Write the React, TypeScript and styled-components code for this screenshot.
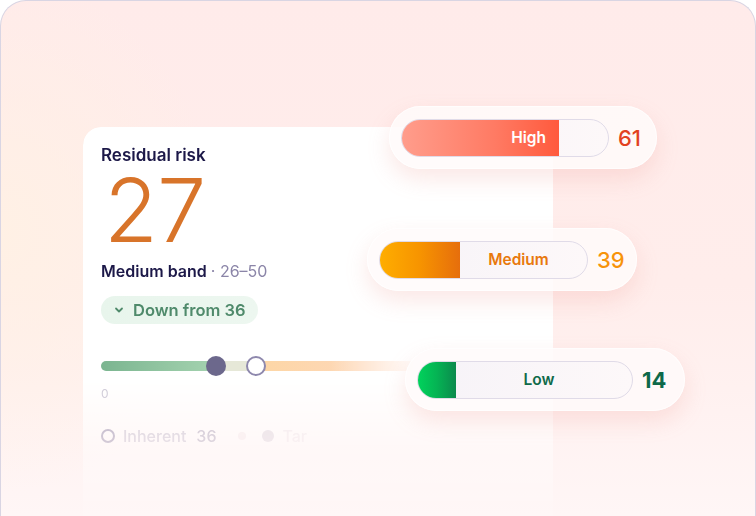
import React from 'react';
import styled, { createGlobalStyle } from 'styled-components';

const Global = createGlobalStyle`
  html, body { margin: 0; padding: 0; background: #ffffff; }
  body { width: 756px; height: 516px; overflow: hidden; font-family: Inter, "Noto Sans", sans-serif; }
`;

const S = {
    Frame: styled.div`
    position: relative;
    box-sizing: border-box;
    width: 756px;
    height: 516px;
    overflow: hidden;
    border: 1px solid #d9d5e3;
    border-bottom: none;
    border-radius: 26px 26px 0 0;
    background:
      radial-gradient(ellipse 220px 260px at 0% 45%, rgba(255, 241, 228, 0.9), rgba(255, 241, 228, 0) 100%),
      linear-gradient(180deg, #ffebea 0%, #ffedeb 55%, #fff6f6 100%);
    padding: 126px 0 0 82px;
    `,
    Card: styled.div`
    box-sizing: border-box;
    width: 470px;
    height: 420px;
    border-radius: 18px;
    background: #ffffff;
    box-shadow: 0 6px 28px rgba(235, 150, 140, 0.18);
    padding: 18px 18px;
    display: flex;
    flex-direction: column;
    align-items: flex-start;
    -webkit-mask-image: linear-gradient(180deg, #000 0px, #000 250px, rgba(0,0,0,0.45) 320px, rgba(0,0,0,0.1) 390px);
    mask-image: linear-gradient(180deg, #000 0px, #000 250px, rgba(0,0,0,0.45) 320px, rgba(0,0,0,0.1) 390px);
    `,
    Title: styled.div`
    font-size: 17px;
    line-height: 20px;
    font-weight: 600;
    color: #1c1848;
    `,
    Score: styled.div`
    margin-top: 10px;
    height: 70px;
    display: flex;
    align-items: center;
    font-size: 88px;
    line-height: 70px;
    font-weight: 300;
    color: #d8742a;
    letter-spacing: -1px;
    margin-left: 3px;
    `,
    Band: styled.div`
    margin-top: 16px;
    font-size: 16px;
    line-height: 20px;
    font-weight: 600;
    color: #1c1848;
    `,
    Range: styled.span`
    font-weight: 400;
    color: #8b85a8;
    `,
    Delta: styled.div`
    margin-top: 15px;
    height: 28px;
    display: flex;
    align-items: center;
    gap: 8px;
    padding: 0 12px 0 12px;
    border-radius: 14px;
    background: linear-gradient(90deg, #e8f5ec 0%, #edf7f0 100%);
    font-size: 16.5px;
    font-weight: 600;
    color: #4f8a6b;
    `,
    Slider: styled.div`
    margin-top: 32px;
    width: 320px;
    height: 20px;
    display: flex;
    align-items: center;
    -webkit-mask-image: linear-gradient(90deg, #000 0, #000 230px, transparent 320px);
    mask-image: linear-gradient(90deg, #000 0, #000 230px, transparent 320px);
    `,
    Track: styled.div<{ $w: number; $bg: string; $round?: boolean }>`
    flex: 0 0 ${p => p.$w}px;
    height: 10px;
    background: ${p => p.$bg};
    border-radius: ${p => (p.$round ? '5px 0 0 5px' : '0')};
    `,
    Knob: styled.div<{ $hollow?: boolean }>`
    box-sizing: border-box;
    flex: 0 0 20px;
    width: 20px;
    height: 20px;
    border-radius: 50%;
    margin: 0 -2px;
    position: relative;
    background: ${p => (p.$hollow ? '#ffffff' : '#6c688c')};
    border: ${p => (p.$hollow ? '2.5px solid #8e88ad' : 'none')};
    `,
    Tick: styled.div`
    margin-top: 10px;
    font-size: 12px;
    line-height: 16px;
    color: #cbc8d6;
    `,
    Legend: styled.div`
    margin-top: 24px;
    display: flex;
    align-items: center;
    gap: 8px;
    font-size: 16px;
    font-weight: 500;
    color: #cfcbd9;
    `,
    Ring: styled.span`
    box-sizing: border-box;
    width: 14px;
    height: 14px;
    border-radius: 50%;
    border: 2px solid #a6a0bb;
    `,
    LegendNum: styled.span`
    color: #bdb8ca;
    margin-left: 2px;
    `,
    Faint: styled.span<{ $c: string; $w: number; $gap: number }>`
    display: inline-block;
    width: ${p => p.$w}px;
    height: ${p => p.$w}px;
    margin-left: ${p => p.$gap}px;
    border-radius: 50%;
    background: ${p => p.$c};
    `,
    FaintText: styled.span`
    color: #f3eef2;
    `,
    Chip: styled.div<{ $x: number; $y: number; $w: number }>`
    position: absolute;
    left: ${p => p.$x}px;
    top: ${p => p.$y}px;
    width: ${p => p.$w}px;
    height: 63px;
    box-sizing: border-box;
    padding: 0 12px;
    display: flex;
    align-items: center;
    gap: 9px;
    border-radius: 32px;
    background: rgba(255, 250, 250, 0.86);
    box-shadow: 0 10px 22px rgba(238, 150, 140, 0.22), 0 0 0 1px rgba(255, 255, 255, 0.7) inset;
    `,
    Bar: styled.div<{ $w: number }>`
    box-sizing: border-box;
    width: ${p => p.$w}px;
    height: 38px;
    display: flex;
    border-radius: 19px;
    border: 1px solid #e0dbe8;
    background: linear-gradient(90deg, #f6f3f8 0%, #fdf8f9 100%);
    overflow: hidden;
    `,
    Fill: styled.div<{ $w: number; $bg: string }>`
    flex: 0 0 ${p => p.$w}px;
    margin: -1px 0 -1px -1px;
    display: flex;
    align-items: center;
    justify-content: flex-end;
    padding-right: 13px;
    box-sizing: border-box;
    background: ${p => p.$bg};
    font-size: 15.5px;
    font-weight: 600;
    color: #ffffff;
    `,
    Rest: styled.div<{ $c: string }>`
    flex: 1;
    display: flex;
    align-items: center;
    justify-content: center;
    padding-right: 10px;
    font-size: 15.5px;
    font-weight: 600;
    color: ${p => p.$c};
    `,
    Value: styled.div<{ $c: string; $weight: number }>`
    font-size: 22px;
    font-weight: ${p => p.$weight};
    color: ${p => p.$c};
    `,
};

const chips = [
    { label: 'High', value: 61, x: 388, y: 105, w: 268, bar: 208, fill: 158, inFill: true,
      bg: 'linear-gradient(90deg, #ff9d8c 0%, #ff7a63 60%, #ff5a3d 100%)', text: '#ffffff', color: '#e2421f', weight: 500 },
    { label: 'Medium', value: 39, x: 366, y: 227, w: 270, bar: 209, fill: 81, inFill: false,
      bg: 'linear-gradient(90deg, #ffae00 0%, #f79400 50%, #e66e0c 100%)', text: '#e8790d', color: '#f7930a', weight: 500 },
    { label: 'Low', value: 14, x: 404, y: 347, w: 280, bar: 216, fill: 39, inFill: false,
      bg: 'linear-gradient(90deg, #00d45c 0%, #05b454 50%, #0b8a4d 100%)', text: '#0f6a49', color: '#0d694a', weight: 700 },
];

const Chevron = () => (
    <svg width="12" height="12" viewBox="0 0 12 12" fill="none">
        <path d="M3 4.5 L6 7.5 L9 4.5" stroke="#4f8a6b" strokeWidth="1.8" strokeLinecap="round" strokeLinejoin="round" />
    </svg>
);

export default function App() {
    return <>
        <Global />
        <S.Frame>
            <S.Card>
                <S.Title>Residual risk</S.Title>
                <S.Score>27</S.Score>
                <S.Band>Medium band <S.Range>· 26–50</S.Range></S.Band>
                <S.Delta><Chevron />Down from 36</S.Delta>
                <S.Slider>
                    <S.Track $w={107} $bg="linear-gradient(90deg, #7bb590, #a2d1ae)" $round />
                    <S.Knob />
                    <S.Track $w={24} $bg="#e6e8d8" />
                    <S.Knob $hollow />
                    <S.Track $w={160} $bg="linear-gradient(90deg, #fdd6a6, #fed9c4)" />
                </S.Slider>
                <S.Tick>0</S.Tick>
                <S.Legend>
                    <S.Ring />
                    Inherent<S.LegendNum>36</S.LegendNum>
                    <S.Faint $c="#f7f0f2" $w={8} $gap={14} />
                    <S.Faint $c="#e4dfe6" $w={12} $gap={8} />
                    <S.FaintText>Tar</S.FaintText>
                </S.Legend>
            </S.Card>
            {chips.map(c => (
                <S.Chip key={c.label} $x={c.x} $y={c.y} $w={c.w}>
                    <S.Bar $w={c.bar}>
                        <S.Fill $w={c.fill} $bg={c.bg}>{c.inFill ? c.label : ''}</S.Fill>
                        <S.Rest $c={c.text}>{c.inFill ? '' : c.label}</S.Rest>
                    </S.Bar>
                    <S.Value $c={c.color} $weight={c.weight}>{c.value}</S.Value>
                </S.Chip>
            ))}
        </S.Frame>
    </>;
}
